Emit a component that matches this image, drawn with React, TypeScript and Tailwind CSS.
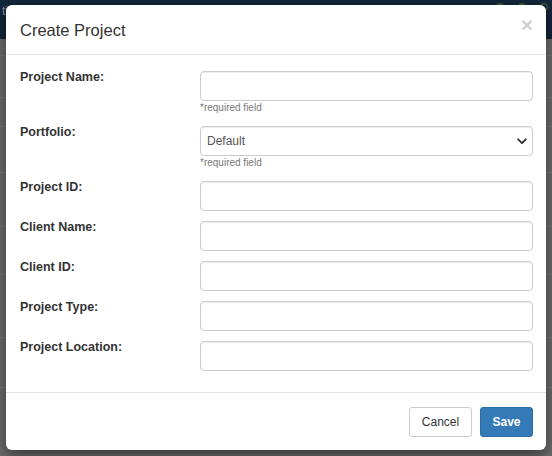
import React from 'react'

type Field = {
  label: string
  kind?: 'input' | 'select'
  required?: boolean
}

const fields: Field[] = [
  { label: 'Project Name:', required: true },
  { label: 'Portfolio:', kind: 'select', required: true },
  { label: 'Project ID:' },
  { label: 'Client Name:' },
  { label: 'Client ID:' },
  { label: 'Project Type:' },
  { label: 'Project Location:' },
]

// rows of the page behind the backdrop
const backdropRows = [17, 42, 29, 46, 54, 48, 63, 50, 70]

function Chevron() {
  return (
    <svg width="10" height="7" viewBox="0 0 10 7" className="pointer-events-none absolute right-[6px] top-[12px]">
      <path d="M1.2 1.3 L5 5.1 L8.8 1.3" fill="none" stroke="#333" strokeWidth="1.9" strokeLinecap="round" strokeLinejoin="round" />
    </svg>
  )
}

function FormRow({ field }: { field: Field }) {
  return (
    <div className="grid grid-cols-[180px_1fr] mb-[10px] last:mb-0">
      <label className="-mt-[2px] text-[12.5px] leading-[17px] font-bold text-[#333]">{field.label}</label>
      <div>
        {field.kind === 'select' ? (
          <div className="relative">
            <select
              defaultValue="Default"
              className="block w-full h-[30px] appearance-none rounded-[4px] border border-[#ccc] bg-white pl-[6px] pr-[24px] text-[12px] text-[#555] shadow-[inset_0_1px_1px_rgba(0,0,0,0.075)] outline-none"
            >
              <option>Default</option>
            </select>
            <Chevron />
          </div>
        ) : (
          <input
            type="text"
            className="block w-full h-[30px] rounded-[4px] border border-[#ccc] bg-white px-[6px] text-[12px] text-[#555] shadow-[inset_0_1px_1px_rgba(0,0,0,0.075)] outline-none"
          />
        )}
        {field.required && (
          <p className="h-[15px] text-[10px] leading-[14px] text-[#777]">*required field</p>
        )}
      </div>
    </div>
  )
}

export default function App() {
  return (
    <div className="relative w-[552px] h-[456px] overflow-hidden bg-[#6c6c6c] font-['Liberation_Sans',Arial,sans-serif]">
      {/* page behind the dialog */}
      <div className="h-[39px] bg-[#13263a] flex items-start justify-between px-[2px] pt-[2px]">
        <span className="text-[12px] text-[#8894a0]">ti</span>
        <div className="flex gap-[14px] pt-[1px] pr-[2px]">
          <span className="w-[8px] h-[8px] rounded-full bg-[#3d5a2a]" />
          <span className="w-[8px] h-[8px] rounded-full bg-[#3d5a2a]" />
          <span className="w-[8px] h-[8px] rounded-full border border-[#4f7a33]" />
        </div>
      </div>
      <div>
        {backdropRows.map((h, i) => (
          <div key={i} style={{ height: h }} className="border-b border-[#767676]" />
        ))}
      </div>

      {/* dialog */}
      <div className="absolute left-[6px] top-[5px] w-[540px] rounded-[6px] bg-white shadow-[0_5px_15px_rgba(0,0,0,0.5)]">
        <div className="h-[50px] border-b border-[#e5e5e5] pl-[14px] pr-[13px] flex items-center justify-between">
          <h4 className="pt-[2px] text-[16.5px] text-[#333]">Create Project</h4>
          <button className="-mt-[10px] text-[21px] leading-none font-bold text-black/20">×</button>
        </div>

        <div className="pt-[16px] pl-[14px] pr-[13px] pb-[21px]">
          {fields.map((f) => (
            <FormRow key={f.label} field={f} />
          ))}
        </div>

        <div className="border-t border-[#e5e5e5] pt-[14px] pb-[13px] pr-[13px] flex justify-end gap-[8px]">
          <button className="h-[30px] w-[63px] rounded-[3px] border border-[#ccc] bg-white text-[12px] text-[#333]">
            Cancel
          </button>
          <button className="h-[30px] w-[53px] rounded-[3px] border border-[#2e6da4] bg-[#337ab7] text-[12px] font-bold text-white">
            Save
          </button>
        </div>
      </div>
    </div>
  )
}
